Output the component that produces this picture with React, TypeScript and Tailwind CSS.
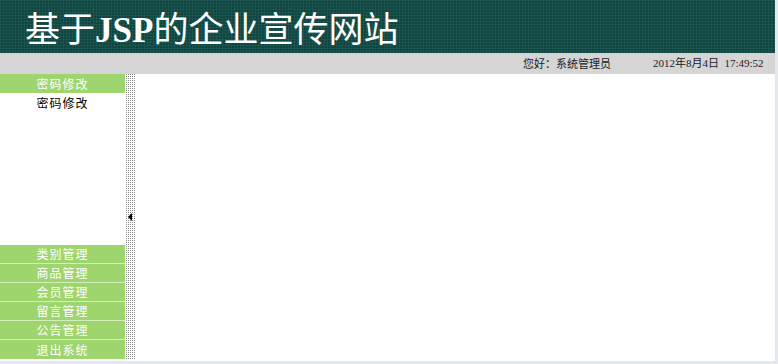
import React from "react";

const menu = ["类别管理", "商品管理", "会员管理", "留言管理", "公告管理", "退出系统"];

export default function App() {
  const cjk = { fontFamily: '"Noto Sans CJK SC", "Liberation Sans", sans-serif' };
  const serif = { fontFamily: '"Liberation Serif", "Noto Sans CJK SC", serif' };
  return (
    <div className="w-[778px] h-[364px] bg-[#e4e8ec] overflow-hidden">
      <div className="w-[775px] h-[361px] bg-white flex flex-col">
        <div className="h-[53px] bg-[#0e4741] flex items-center pl-[25px] pt-[7px] bg-[image:linear-gradient(rgba(255,255,255,0.05)_1px,transparent_1px),linear-gradient(90deg,rgba(255,255,255,0.05)_1px,transparent_1px)] bg-[size:3px_3px]">
          <span className="text-white text-[35px] leading-none" style={serif}>
            基于<b>JSP</b>的企业宣传网站
          </span>
        </div>
        <div className="h-[21px] bg-[#d5d5d5] flex items-center text-[11px] text-[#222]" style={cjk}>
          <span className="ml-[523px]">您好：系统管理员</span>
          <span className="ml-[42px] text-[11px]" style={serif}>
            2012年8月4日&nbsp;&nbsp;17:49:52
          </span>
        </div>
        <div className="flex h-[285px]">
          <div className="w-[125px] flex flex-col" style={cjk}>
            <div className="h-[19px] bg-[#9fd56e] text-white text-[12px] tracking-[1px] flex items-center justify-center">
              密码修改
            </div>
            <div className="h-[19px] text-black text-[12px] tracking-[1px] flex items-center justify-center">密码修改</div>
            <div className="flex-1" />
            {menu.map((m, i) => (
              <div
                key={m}
                className={
                  "h-[19px] bg-[#9fd56e] text-white text-[12px] tracking-[1px] flex items-center justify-center " +
                  (i < menu.length - 1 ? "border-b border-[#d2efb8]" : "")
                }
              >
                {m}
              </div>
            ))}
          </div>
          <div className="w-[11px] relative bg-white bg-[image:conic-gradient(#8a8a8a_25%,transparent_0)] bg-[size:2px_2px]">
            <div className="absolute left-[3px] top-[139px] w-0 h-0 border-y-[4px] border-y-transparent border-r-[4px] border-r-black" />
          </div>
          <div className="flex-1 bg-white" />
        </div>
      </div>
    </div>
  );
}
